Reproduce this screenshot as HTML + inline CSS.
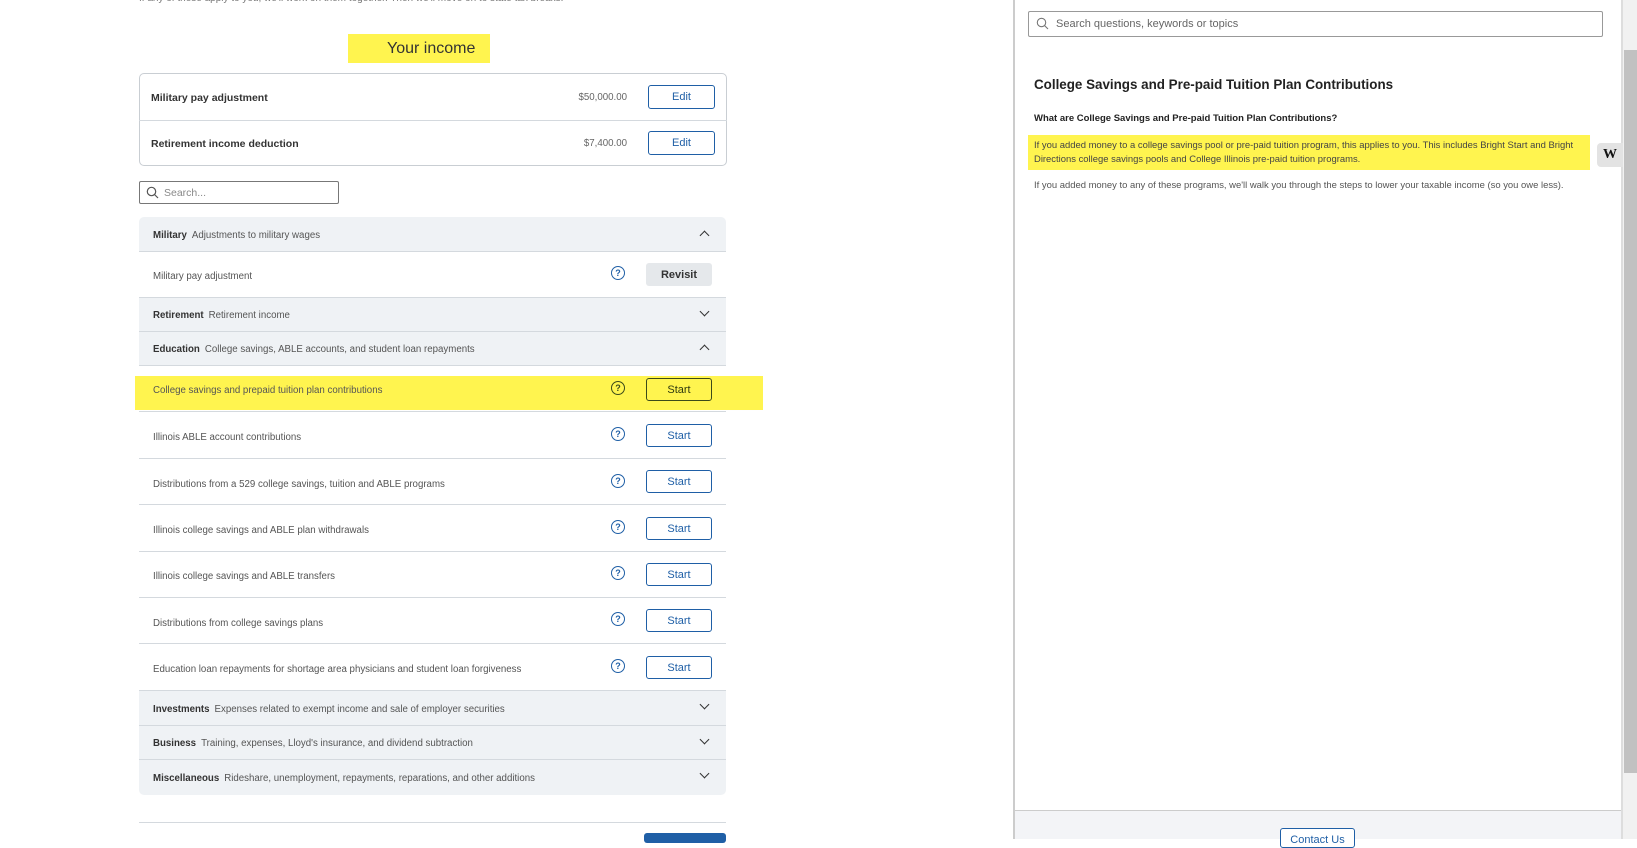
<!DOCTYPE html>
<html><head><meta charset="utf-8"><style>
*{box-sizing:border-box;margin:0;padding:0}
body{width:1637px;height:839px;overflow:hidden;background:#fff;font-family:"Liberation Sans",sans-serif;color:#393a3d;position:relative}
.a{position:absolute}
.btn{position:absolute;border:1px solid #1f5fa6;border-radius:3px;color:#1f5fa6;font-size:11px;display:flex;align-items:center;justify-content:center;background:#fff}
.q{position:absolute;width:14px;height:14px;border:1.6px solid #1f5fa6;border-radius:50%;color:#1f5fa6;font-size:9px;font-weight:bold;display:flex;align-items:center;justify-content:center}
.hd{position:absolute;left:139px;width:587px;background:#eff2f5;border-bottom:1px solid #d4d9de;font-size:9.7px;color:#555}
.hd b{color:#333;margin-right:5px}
.row{position:absolute;left:139px;width:587px;border-bottom:1px solid #d4d9de;font-size:9.7px;color:#555}
.chev{position:absolute;right:18px;top:12px;width:7px;height:7px;border-right:1.5px solid #333;border-bottom:1.5px solid #333}
</style></head><body>
<div class="a" style="left:139px;top:-7px;font-size:10px;color:#777">If any of these apply to you, we'll work on them together. Then we'll move on to state tax breaks.</div>
<div class="a" style="left:348px;top:34px;width:142px;height:29px;background:#fff44f"></div>
<div class="a" style="left:387px;top:40px;font-size:16px;color:#333">Your income</div>

<div class="a" style="left:139px;top:73px;width:588px;height:93px;border:1px solid #c9ced3;border-radius:5px"></div>
<div class="a" style="left:139px;top:120px;width:588px;border-top:1px solid #d4d9de"></div>
<div class="a" style="left:151px;top:92px;font-size:10.5px;font-weight:bold;color:#333">Military pay adjustment</div>
<div class="a" style="left:151px;top:138px;font-size:10.5px;font-weight:bold;color:#333">Retirement income deduction</div>
<div class="a" style="left:560px;top:92px;width:67px;text-align:right;font-size:9.7px;color:#666">$50,000.00</div>
<div class="a" style="left:560px;top:138px;width:67px;text-align:right;font-size:9.7px;color:#666">$7,400.00</div>
<div class="btn" style="left:648px;top:85px;width:67px;height:24px">Edit</div>
<div class="btn" style="left:648px;top:131px;width:67px;height:24px">Edit</div>

<div class="a" style="left:139px;top:181px;width:200px;height:23px;border:1px solid #777;border-radius:2px"></div>
<svg class="a" style="left:146px;top:186px" width="13" height="13" viewBox="0 0 13 13"><circle cx="5.5" cy="5.5" r="4.2" fill="none" stroke="#555" stroke-width="1.2"/><line x1="8.5" y1="8.5" x2="12" y2="12" stroke="#555" stroke-width="1.2"/></svg>
<div class="a" style="left:164px;top:187px;font-size:10.5px;color:#888">Search...</div>

<div class="hd" style="top:217px;height:35px;border-radius:5px 5px 0 0;padding:13px 14px"><b>Military</b>Adjustments to military wages<div class="chev" style="transform:rotate(-135deg);top:15px"></div></div>
<div class="row" style="top:252px;height:46px;padding:19px 14px">Military pay adjustment</div>
<div class="q" style="left:611px;top:266px">?</div>
<div class="a" style="left:646px;top:263px;width:66px;height:23px;background:#e5e8eb;border-radius:3px;font-size:11px;font-weight:bold;color:#333;display:flex;align-items:center;justify-content:center">Revisit</div>
<div class="hd" style="top:298px;height:34px;padding:12px 14px"><b>Retirement</b>Retirement income<div class="chev" style="transform:rotate(45deg);top:10px"></div></div>
<div class="hd" style="top:332px;height:34px;padding:12px 14px"><b>Education</b>College savings, ABLE accounts, and student loan repayments<div class="chev" style="transform:rotate(-135deg);top:14px"></div></div>

<div class="a" style="left:135px;top:376px;width:628px;height:34px;background:#fff44f"></div>
<div class="row" style="top:366px;height:46px;padding:19px 14px">College savings and prepaid tuition plan contributions</div>
<div class="q" style="left:611px;top:381px;border-color:#3b4a1a;color:#3b4a1a">?</div>
<div class="btn" style="left:646px;top:378px;width:66px;height:23px;border-color:#3b4a1a;color:#2f3a10;background:transparent">Start</div>

<div class="row" style="top:412px;height:47px;padding:20px 14px">Illinois ABLE account contributions</div>
<div class="q" style="left:611px;top:427px">?</div><div class="btn" style="left:646px;top:424px;width:66px;height:23px">Start</div>
<div class="row" style="top:459px;height:46px;padding:20px 14px">Distributions from a 529 college savings, tuition and ABLE programs</div>
<div class="q" style="left:611px;top:474px">?</div><div class="btn" style="left:646px;top:470px;width:66px;height:23px">Start</div>
<div class="row" style="top:505px;height:47px;padding:20px 14px">Illinois college savings and ABLE plan withdrawals</div>
<div class="q" style="left:611px;top:520px">?</div><div class="btn" style="left:646px;top:517px;width:66px;height:23px">Start</div>
<div class="row" style="top:552px;height:46px;padding:19px 14px">Illinois college savings and ABLE transfers</div>
<div class="q" style="left:611px;top:566px">?</div><div class="btn" style="left:646px;top:563px;width:66px;height:23px">Start</div>
<div class="row" style="top:598px;height:46px;padding:20px 14px">Distributions from college savings plans</div>
<div class="q" style="left:611px;top:612px">?</div><div class="btn" style="left:646px;top:609px;width:66px;height:23px">Start</div>
<div class="row" style="top:644px;height:47px;padding:20px 14px">Education loan repayments for shortage area physicians and student loan forgiveness</div>
<div class="q" style="left:611px;top:659px">?</div><div class="btn" style="left:646px;top:656px;width:66px;height:23px">Start</div>

<div class="hd" style="top:691px;height:35px;padding:13px 14px"><b>Investments</b>Expenses related to exempt income and sale of employer securities<div class="chev" style="transform:rotate(45deg);top:10px"></div></div>
<div class="hd" style="top:726px;height:34px;padding:12px 14px"><b>Business</b>Training, expenses, Lloyd's insurance, and dividend subtraction<div class="chev" style="transform:rotate(45deg);top:10px"></div></div>
<div class="hd" style="top:760px;height:35px;padding:13px 14px;border-bottom:none;border-radius:0 0 5px 5px"><b>Miscellaneous</b>Rideshare, unemployment, repayments, reparations, and other additions<div class="chev" style="transform:rotate(45deg);top:10px"></div></div>
<div class="a" style="left:139px;top:822px;width:587px;border-top:1px solid #d4d9de"></div>
<div class="a" style="left:644px;top:833px;width:82px;height:10px;background:#1f5fa6;border-radius:3px"></div>

<!-- right panel -->
<div class="a" style="left:1013px;top:0;width:2px;height:839px;background:#ccc"></div>
<div class="a" style="left:1621px;top:0;width:2px;height:839px;background:#ddd"></div>
<div class="a" style="left:1623px;top:0;width:14px;height:839px;background:#f1f1f1"></div>
<div class="a" style="left:1624px;top:50px;width:13px;height:723px;background:#c1c1c1"></div>
<div class="a" style="left:1028px;top:11px;width:575px;height:26px;border:1px solid #999;border-radius:2px"></div>
<svg class="a" style="left:1036px;top:17px" width="13" height="13" viewBox="0 0 13 13"><circle cx="5.5" cy="5.5" r="4.2" fill="none" stroke="#777" stroke-width="1.1"/><line x1="8.5" y1="8.5" x2="12" y2="12" stroke="#777" stroke-width="1.1"/></svg>
<div class="a" style="left:1056px;top:18px;font-size:11px;color:#666">Search questions, keywords or topics</div>
<div class="a" style="left:1034px;top:77px;font-size:13.4px;font-weight:bold;color:#222">College Savings and Pre-paid Tuition Plan Contributions</div>
<div class="a" style="left:1034px;top:113px;font-size:9.5px;font-weight:bold;color:#222">What are College Savings and Pre-paid Tuition Plan Contributions?</div>
<div class="a" style="left:1028px;top:135px;width:562px;height:35px;background:#fff44f"></div>
<div class="a" style="left:1034px;top:139px;width:560px;font-size:9.45px;line-height:14px;color:#444">If you added money to a college savings pool or pre-paid tuition program, this applies to you. This includes Bright Start and Bright Directions college savings pools and College Illinois pre-paid tuition programs.</div>
<div class="a" style="left:1597px;top:143px;width:26px;height:24px;background:#e3e3e3;border-radius:4px 0 0 4px;font-family:'Liberation Serif',serif;font-weight:bold;font-size:14px;color:#111;display:flex;align-items:center;justify-content:center">W</div>
<div class="a" style="left:1034px;top:180px;font-size:9.45px;color:#555">If you added money to any of these programs, we'll walk you through the steps to lower your taxable income (so you owe less).</div>
<div class="a" style="left:1015px;top:810px;width:606px;height:29px;background:#f3f4f7;border-top:1px solid #ccc"></div>
<div class="a" style="left:1280px;top:828px;width:75px;height:20px;border:1px solid #1f5fa6;border-radius:3px;background:#fff;font-size:11px;color:#1f5fa6;text-align:center;padding-top:5px">Contact Us</div>
</body></html>
